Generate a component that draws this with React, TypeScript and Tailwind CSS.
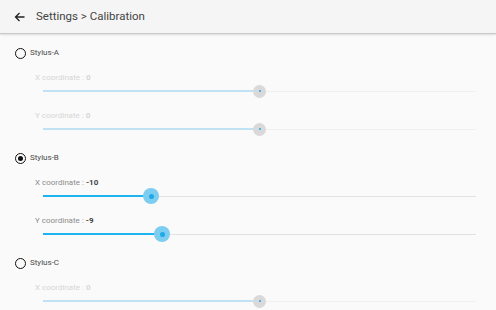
import React from "react";

type SliderProps = { label: string; value: number; enabled: boolean; first?: boolean };

function Slider({ label, value, enabled, first }: SliderProps) {
  const pct = ((value + 20) / 40) * 100;
  return (
    <div className={first ? "mt-[8px]" : "mt-[12px]"}>
      <div className="h-[14px] flex items-center pl-[20px] text-[8px] leading-none">
        <span className={enabled ? "text-[#8c8c8c]" : "text-[#d6d6d6]"}>{label} : </span>
        <span className={enabled ? "ml-[2px] font-bold text-[#444]" : "ml-[2px] font-bold text-[#d6d6d6]"}>{value}</span>
      </div>
      <div className="h-[12px] pl-[28px] pr-[20px] flex items-center">
        <div className="relative w-[433px] h-[12px]">
          <div className={enabled ? "absolute left-0 right-0 top-[5.5px] h-px bg-[#e2e2e2]" : "absolute left-0 right-0 top-[5.5px] h-px bg-[#f0f0f0]"} />
          <div
            className={enabled ? "absolute left-0 top-[5px] h-[2px] bg-[#1eb4f0]" : "absolute left-0 top-[5px] h-[2px] bg-[#bfe3f5]"}
            style={{ width: `${pct}%` }}
          />
          {enabled ? (
            <div
              className="absolute top-[6px] w-[16px] h-[16px] -ml-[8px] -mt-[8px] rounded-full bg-[#7dcdf0] flex items-center justify-center"
              style={{ left: `${pct}%` }}
            >
              <div className="w-[5px] h-[5px] rounded-full bg-[#1ea8e6]" />
            </div>
          ) : (
            <div
              className="absolute top-[6px] w-[13px] h-[13px] -ml-[6.5px] -mt-[6.5px] rounded-full bg-[#d9d9d9] flex items-center justify-center"
              style={{ left: `${pct}%` }}
            >
              <div className="w-[2px] h-[2px] rounded-full bg-[#1ea8e6]" />
            </div>
          )}
        </div>
      </div>
    </div>
  );
}

function Radio({ label, checked, first }: { label: string; checked: boolean; first?: boolean }) {
  return (
    <div className={first ? "h-[20px] flex items-center" : "mt-[13px] h-[20px] flex items-center"}>
      <div className="w-[11px] h-[11px] rounded-full border-[1.5px] border-[#111] flex items-center justify-center">
        {checked && <div className="w-[5px] h-[5px] rounded-full bg-[#111]" />}
      </div>
      <span className="ml-[4px] text-[8px] leading-none font-normal text-[#4a4a4a]">{label}</span>
    </div>
  );
}

export default function App() {
  return (
    <div
      className="w-[496px] h-[310px] overflow-hidden bg-[#fafafa]"
      style={{ fontFamily: "Roboto, 'Noto Sans', sans-serif" }}
    >
      <div className="h-[34px] bg-[#f5f5f5] border-b border-[#c9c9c9] shadow-[0_1px_2px_rgba(0,0,0,0.12)] flex items-center">
        <svg className="ml-[14px]" width="11" height="10" viewBox="0 0 11 10">
          <path d="M10.5 5H1.5M5.5 1L1.5 5L5.5 9" fill="none" stroke="#222" strokeWidth="1.3" />
        </svg>
        <span className="ml-[11px] text-[11.5px] text-[#444]">Settings &gt; Calibration</span>
      </div>
      <div className="pl-[15px] pt-[9px]">
        <Radio label="Stylus-A" checked={false} first />
        <Slider label="X coordinate" value={0} enabled={false} first />
        <Slider label="Y coordinate" value={0} enabled={false} />
        <Radio label="Stylus-B" checked />
        <Slider label="X coordinate" value={-10} enabled first />
        <Slider label="Y coordinate" value={-9} enabled />
        <Radio label="Stylus-C" checked={false} />
        <Slider label="X coordinate" value={0} enabled={false} first />
      </div>
    </div>
  );
}
